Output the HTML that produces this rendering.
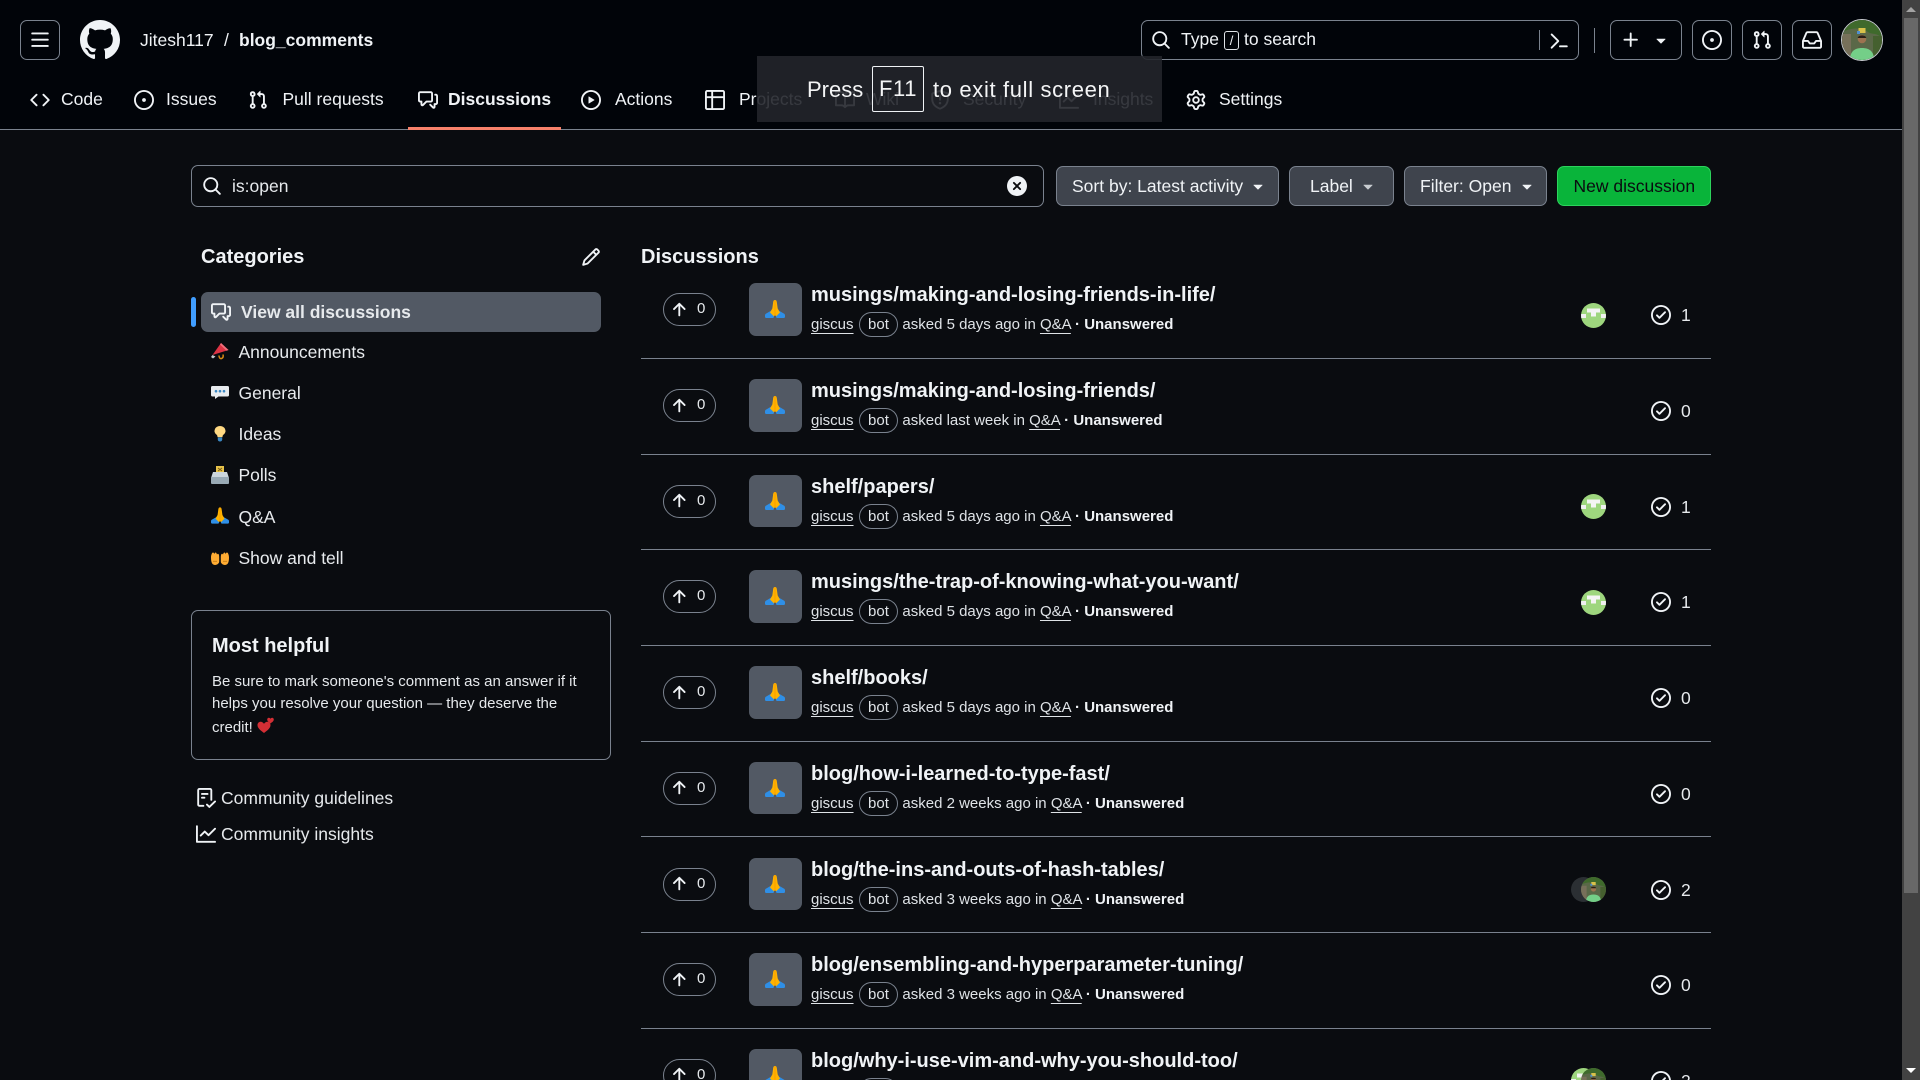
<!DOCTYPE html>
<html lang="en"><head><meta charset="utf-8"><title>Discussions · Jitesh117/blog_comments</title>
<style>
*{box-sizing:border-box}
html,body{margin:0;padding:0;width:1920px;height:1080px;overflow:hidden;background:#0a0c10;color:#f0f3f6;font-family:"Liberation Sans",sans-serif}
body{position:relative}
.a{position:absolute}
.t{position:absolute;white-space:nowrap;line-height:20px;font-size:17.5px}
.b{font-weight:700}
svg{display:block}
svg.i{position:absolute;fill:#f0f3f6}
.box{position:absolute;border:1px solid #7a828e;border-radius:7px}
.btn{position:absolute;height:40px;top:166px;background:#3f444d;border:1px solid #7a828e;border-radius:7px}
.row{position:absolute;left:641px;width:1070px;height:96.7px;border-bottom:1px solid #7a828e}
.vote{position:absolute;left:22px;top:31px;width:53px;height:33px;border:1px solid #7a828e;border-radius:17px}
.vote svg{position:absolute;left:5px;top:5.5px;width:20px;height:20px;fill:#f0f3f6}
.vote span{position:absolute;left:33px;top:5px;font-size:15px;line-height:20px;color:#e6e9ec}
.sq{position:absolute;left:108px;top:21px;width:52.5px;height:52.5px;background:#525964;border-radius:7px}
.sq svg{position:absolute;left:16px;top:17px;width:20px;height:18px}
.ttl{position:absolute;left:170px;top:21px;font-size:20px;font-weight:700;line-height:24px;white-space:nowrap;color:#f0f3f6}
.sub{position:absolute;left:170px;top:51px;font-size:15px;line-height:24px;white-space:nowrap;color:#dfe3e7}
.sub u{text-underline-offset:4px;text-decoration-thickness:1px}
.sub i{font-style:normal;display:inline-block;height:25px;line-height:23px;padding:0 8.5px;margin:-1px 4px 0 5px;border:1px solid #7a828e;border-radius:13px;vertical-align:top}
.sub b{color:#f0f3f6}
.chk{position:absolute;left:1010px;top:43px;width:20px;height:20px;fill:#f0f3f6}
.num{position:absolute;left:1040px;top:43px;font-size:17.5px;line-height:20px;color:#e6e9ec}
.av{position:absolute;top:40.5px;width:25px;height:25px;border-radius:50%;overflow:hidden}
.cat{position:absolute;left:238.500px;font-size:17.5px;line-height:20px;white-space:nowrap;color:#e8ebee}
.hdbtn{position:absolute;top:20px;height:40px;border:1px solid #7a828e;border-radius:7px}
</style></head><body>
<svg width="0" height="0" style="position:absolute">
<defs>
<symbol id="pray" viewBox="0 0 20 18"><path d="M6 10.800 1 13.600c-.7.400-1 1-1 1.700v1.500c0 .7.500 1.200 1.200 1.200h6.600c.7 0 1.200-.5 1.200-1.200v-3z" fill="#2f8fe6"/><path d="M14 10.800l5 2.800c.7.400 1 1 1 1.700v1.500c0 .7-.5 1.200-1.200 1.200h-6.600c-.7 0-1.200-.5-1.200-1.200v-3z" fill="#2f8fe6"/><path d="M10 0C8.500 0 8.200 1.300 8 3.500L7.300 8.500 5 12.500 8.800 16.300 10 15.300l1.200 1L15 12.500 12.700 8.500 12 3.500C11.800 1.300 11.500 0 10 0z" fill="#ffb300"/><path d="M10 0v15.300" stroke="#f59000" stroke-width=".6"/></symbol>
<symbol id="ident" viewBox="0 0 25 25"><rect width="25" height="25" fill="#9ed67e"/><path d="M0 0h6v2H0zM19 0h6v2h-6z" fill="#f0f0f0"/><path d="M6 5.500h13v4h-4v4h-5v-4H6z" fill="#f4f4f4"/><path d="M0 11h5v4H0zM20 11h5v4h-5z" fill="#f0f0f0"/></symbol>
<symbol id="photo" viewBox="0 0 40 40"><rect width="40" height="40" fill="#5a6848"/><path d="M0 0h40v18c-6-6-10-3-14-6S14 6 0 12z" fill="#3f6a2c"/><rect x="0" y="14" width="9" height="26" fill="#77705a"/><rect x="31" y="16" width="9" height="24" fill="#45602f"/><rect x="16.500" y="8" width="7" height="5" fill="#d9c24a"/><rect x="15" y="11" width="3" height="3" fill="#4f8fd0"/><circle cx="20" cy="19" r="4.300" fill="#9d7350"/><path d="M15.700 18c.5-3.500 8-3.500 8.600 0z" fill="#2a2018"/><path d="M8 40c0-8 4-12 12-12s12 4 12 12z" fill="#74cf88"/></symbol>
<symbol id="up" viewBox="0 0 16 16"><path d="M3.470 7.780a.75.75 0 0 1 0-1.060l4.250-4.250a.75.75 0 0 1 1.060 0l4.250 4.250a.751.751 0 0 1-.018 1.042.751.751 0 0 1-1.042.018L9 4.810v7.440a.75.75 0 0 1-1.500 0V4.810L4.530 7.780a.75.75 0 0 1-1.060 0Z"/></symbol>
<symbol id="chk" viewBox="0 0 16 16"><path d="M0 8a8 8 0 1 1 16 0A8 8 0 0 1 0 8Zm1.500 0a6.500 6.500 0 1 0 13 0 6.500 6.500 0 0 0-13 0Zm10.280-1.720-4.500 4.500a.75.75 0 0 1-1.060 0l-2-2a.751.751 0 0 1 .018-1.042.751.751 0 0 1 1.042-.018l1.470 1.470 3.970-3.970a.751.751 0 0 1 1.042.018.751.751 0 0 1 .018 1.042Z"/></symbol>
<symbol id="caret" viewBox="0 0 16 16"><path d="m4.427 7.427 3.396 3.396a.25.25 0 0 0 .354 0l3.396-3.396A.25.25 0 0 0 11.396 7H4.604a.25.25 0 0 0-.177.427Z"/></symbol>
<symbol id="search" viewBox="0 0 16 16"><path d="M10.680 11.740a6 6 0 0 1-7.922-8.982 6 6 0 0 1 8.982 7.922l3.040 3.040a.749.749 0 0 1-.326 1.275.749.749 0 0 1-.734-.215ZM11.500 7a4.499 4.499 0 1 0-8.997 0A4.499 4.499 0 0 0 11.500 7Z"/></symbol>
<symbol id="issue" viewBox="0 0 16 16"><path d="M8 9.500a1.500 1.500 0 1 0 0-3 1.500 1.500 0 0 0 0 3Z"/><path d="M8 0a8 8 0 1 1 0 16A8 8 0 0 1 8 0ZM1.500 8a6.500 6.500 0 1 0 13 0 6.500 6.500 0 0 0-13 0Z"/></symbol>
<symbol id="pr" viewBox="0 0 16 16"><path d="M1.5 3.25a2.25 2.25 0 1 1 3 2.122v5.256a2.251 2.251 0 1 1-1.5 0V5.372A2.25 2.25 0 0 1 1.5 3.25Zm5.677-.177L9.573.677A.25.25 0 0 1 10 .854V2.5h1A2.5 2.5 0 0 1 13.5 5v5.628a2.251 2.251 0 1 1-1.5 0V5a1 1 0 0 0-1-1h-1v1.646a.25.25 0 0 1-.427.177L7.177 3.427a.25.25 0 0 1 0-.354ZM3.75 2.5a.75.75 0 1 0 0 1.5.75.75 0 0 0 0-1.5Zm0 9.5a.75.75 0 1 0 0 1.5.75.75 0 0 0 0-1.5Zm8.25.75a.75.75 0 1 0 1.5 0 .75.75 0 0 0-1.5 0Z"/></symbol>
<symbol id="disc" viewBox="0 0 16 16"><path d="M1.75 1h8.5c.966 0 1.75.784 1.75 1.75v5.5A1.75 1.75 0 0 1 10.25 10H7.061l-2.574 2.573A1.458 1.458 0 0 1 2 11.543V10h-.25A1.75 1.75 0 0 1 0 8.25v-5.5C0 1.784.784 1 1.75 1ZM1.5 2.75v5.5c0 .138.112.25.25.25h1a.75.75 0 0 1 .75.75v2.19l2.72-2.72a.749.749 0 0 1 .53-.22h3.5a.25.25 0 0 0 .25-.25v-5.5a.25.25 0 0 0-.25-.25h-8.5a.25.25 0 0 0-.25.25Zm13 2a.25.25 0 0 0-.25-.25h-.5a.75.75 0 0 1 0-1.5h.5c.966 0 1.75.784 1.75 1.75v5.5A1.75 1.75 0 0 1 14.25 12H14v1.543a1.458 1.458 0 0 1-2.487 1.03L9.22 12.28a.749.749 0 0 1 .326-1.275.749.749 0 0 1 .734.215l2.22 2.22v-2.19a.75.75 0 0 1 .75-.75h1a.25.25 0 0 0 .25-.25Z"/></symbol>
<symbol id="graph" viewBox="0 0 16 16"><path d="M1.5 1.75V13.5h13.75a.75.75 0 0 1 0 1.5H.75a.75.75 0 0 1-.75-.75V1.75a.75.75 0 0 1 1.5 0Zm14.28 2.53-5.25 5.25a.75.75 0 0 1-1.06 0L7 7.06 4.28 9.78a.751.751 0 0 1-1.042-.018.751.751 0 0 1-.018-1.042l3.25-3.25a.75.75 0 0 1 1.06 0L10 7.94l4.72-4.72a.751.751 0 0 1 1.042.018.751.751 0 0 1 .018 1.042Z"/></symbol>
</defs></svg>

<!-- header -->
<div class="a" style="left:0;top:0;width:1902px;height:129.500px;background:#010409;border-bottom:1px solid #7a828e"></div>
<div class="hdbtn" style="left:20px;width:40px"><svg class="i" style="left:9px;top:9px;width:20px;height:20px" viewBox="0 0 16 16"><path d="M1 2.75A.75.75 0 0 1 1.75 2h12.5a.75.75 0 0 1 0 1.5H1.75A.75.75 0 0 1 1 2.75Zm0 5A.75.75 0 0 1 1.75 7h12.5a.75.75 0 0 1 0 1.5H1.75A.75.75 0 0 1 1 7.75ZM1.75 12h12.5a.75.75 0 0 1 0 1.5H1.75a.75.75 0 0 1 0-1.5Z"/></svg></div>
<svg class="i" style="left:80px;top:20px;width:40px;height:40px" viewBox="0 0 16 16"><path d="M8 0c4.42 0 8 3.58 8 8a8.013 8.013 0 0 1-5.45 7.59c-.4.08-.55-.17-.55-.38 0-.27.01-1.13.01-2.2 0-.75-.25-1.23-.54-1.48 1.78-.2 3.65-.88 3.65-3.95 0-.88-.31-1.59-.82-2.15.08-.2.36-1.02-.08-2.12 0 0-.67-.22-2.2.82-.64-.18-1.32-.27-2-.27-.68 0-1.36.09-2 .27-1.53-1.03-2.2-.82-2.2-.82-.44 1.1-.16 1.92-.08 2.12-.51.56-.82 1.28-.82 2.15 0 3.06 1.86 3.75 3.64 3.95-.23.2-.44.55-.51 1.07-.46.21-1.61.55-2.33-.66-.15-.24-.6-.83-1.23-.82-.67.01-.27.38.01.53.34.19.73.9.82 1.13.16.45.68 1.31 2.69.94 0 .67.01 1.3.01 1.49 0 .21-.15.45-.55.38A7.995 7.995 0 0 1 0 8c0-4.42 3.58-8 8-8Z"/></svg>
<span class="t" style="left:140px;top:30px">Jitesh117</span>
<span class="t" style="left:224px;top:30px">/</span>
<span class="t b" style="left:239px;top:30px">blog_comments</span>

<svg class="i" style="left:30px;top:90px;width:20px;height:20px" viewBox="0 0 16 16"><path d="m11.28 3.22 4.25 4.25a.75.75 0 0 1 0 1.06l-4.25 4.25a.749.749 0 0 1-1.275-.326.749.749 0 0 1 .215-.734L13.94 8l-3.72-3.72a.749.749 0 0 1 .326-1.275.749.749 0 0 1 .734.215Zm-6.56 0a.751.751 0 0 1 1.042.018.751.751 0 0 1 .018 1.042L2.06 8l3.72 3.72a.749.749 0 0 1-.326 1.275.749.749 0 0 1-.734-.215L.47 8.53a.75.75 0 0 1 0-1.06Z"/></svg>
<span class="t" style="left:61px;top:89px">Code</span>
<svg class="i" style="left:134px;top:90px;width:20px;height:20px"><use href="#issue"/></svg>
<span class="t" style="left:166px;top:89px">Issues</span>
<svg class="i" style="left:248px;top:90px;width:20px;height:20px"><use href="#pr"/></svg>
<span class="t" style="left:282.500px;top:89px">Pull requests</span>
<svg class="i" style="left:418px;top:90px;width:20px;height:20px"><use href="#disc"/></svg>
<span class="t b" style="left:448px;top:89px">Discussions</span>
<div class="a" style="left:408px;top:127px;width:153px;height:2.500px;background:#f7816a"></div>
<svg class="i" style="left:581px;top:90px;width:20px;height:20px" viewBox="0 0 16 16"><path d="M8 0a8 8 0 1 1 0 16A8 8 0 0 1 8 0ZM1.5 8a6.5 6.5 0 1 0 13 0 6.5 6.5 0 0 0-13 0Zm4.879-2.773 4.264 2.559a.25.25 0 0 1 0 .428l-4.264 2.559A.25.25 0 0 1 6 10.559V5.442a.25.25 0 0 1 .379-.215Z"/></svg>
<span class="t" style="left:615px;top:89px">Actions</span>
<svg class="i" style="left:705px;top:90px;width:20px;height:20px" viewBox="0 0 16 16"><path d="M0 1.75C0 .784.784 0 1.75 0h12.5C15.216 0 16 .784 16 1.75v12.5A1.75 1.75 0 0 1 14.25 16H1.75A1.75 1.75 0 0 1 0 14.25ZM6.5 6.5v8h7.75a.25.25 0 0 0 .25-.25V6.5Zm8-1.5V1.75a.25.25 0 0 0-.25-.25H6.5V5Zm-13 1.5v7.75c0 .138.112.25.25.25H5v-8ZM5 5V1.5H1.75a.25.25 0 0 0-.25.25V5Z"/></svg>
<span class="t" style="left:739px;top:89px">Projects</span>
<svg class="i" style="left:835px;top:90px;width:20px;height:20px" viewBox="0 0 16 16"><path d="M0 1.75A.75.75 0 0 1 .75 1h4.253c1.227 0 2.317.59 3 1.501A3.743 3.743 0 0 1 11.006 1h4.245a.75.75 0 0 1 .75.75v10.5a.75.75 0 0 1-.75.75h-4.507a2.25 2.25 0 0 0-1.591.659l-.622.621a.75.75 0 0 1-1.06 0l-.622-.621A2.25 2.25 0 0 0 5.258 13H.75a.75.75 0 0 1-.75-.75Zm7.251 10.324.004-5.073-.002-2.253A2.25 2.25 0 0 0 5.003 2.5H1.5v9h3.757a3.75 3.75 0 0 1 1.994.574ZM8.755 4.75l-.004 7.322a3.752 3.752 0 0 1 1.992-.572H14.5v-9h-3.495a2.25 2.25 0 0 0-2.25 2.25Z"/></svg>
<span class="t" style="left:866px;top:89px">Wiki</span>
<svg class="i" style="left:930px;top:90px;width:20px;height:20px" viewBox="0 0 16 16"><path d="M7.467.133a1.748 1.748 0 0 1 1.066 0l5.25 1.68A1.75 1.75 0 0 1 15 3.48V7c0 1.566-.32 3.182-1.303 4.682-.983 1.498-2.585 2.813-5.032 3.855a1.697 1.697 0 0 1-1.33 0c-2.447-1.042-4.049-2.357-5.032-3.855C1.32 10.182 1 8.566 1 7V3.48a1.75 1.75 0 0 1 1.217-1.667Zm.61 1.429a.25.25 0 0 0-.153 0l-5.25 1.68a.25.25 0 0 0-.174.238V7c0 1.358.275 2.666 1.057 3.86.784 1.194 2.121 2.34 4.366 3.297a.196.196 0 0 0 .154 0c2.245-.956 3.582-2.104 4.366-3.298C13.225 9.666 13.5 8.36 13.5 7V3.48a.251.251 0 0 0-.174-.237l-5.25-1.68ZM8.75 4.75v3a.75.75 0 0 1-1.5 0v-3a.75.75 0 0 1 1.5 0ZM9 10.5a1 1 0 1 1-2 0 1 1 0 0 1 2 0Z"/></svg>
<span class="t" style="left:963px;top:89px">Security</span>
<svg class="i" style="left:1059px;top:90px;width:20px;height:20px"><use href="#graph"/></svg>
<span class="t" style="left:1093px;top:89px">Insights</span>
<svg class="i" style="left:1186px;top:90px;width:20px;height:20px" viewBox="0 0 16 16"><path d="M8 0a8.2 8.2 0 0 1 .701.031C9.444.095 9.99.645 10.16 1.29l.288 1.107c.018.066.079.158.212.224.231.114.454.243.668.386.123.082.233.09.299.071l1.103-.303c.644-.176 1.392.021 1.82.63.27.385.506.792.704 1.218.315.675.111 1.422-.364 1.891l-.814.806c-.049.048-.098.147-.088.294.016.257.016.515 0 .772-.01.147.038.246.088.294l.814.806c.475.469.679 1.216.364 1.891a7.977 7.977 0 0 1-.704 1.217c-.428.61-1.176.807-1.82.63l-1.102-.302c-.067-.019-.177-.011-.3.071a5.909 5.909 0 0 1-.668.386c-.133.066-.194.158-.211.224l-.29 1.106c-.168.646-.715 1.196-1.458 1.26a8.006 8.006 0 0 1-1.402 0c-.743-.064-1.289-.614-1.458-1.26l-.289-1.106c-.018-.066-.079-.158-.212-.224a5.738 5.738 0 0 1-.668-.386c-.123-.082-.233-.09-.299-.071l-1.103.303c-.644.176-1.392-.021-1.82-.63a8.12 8.12 0 0 1-.704-1.218c-.315-.675-.111-1.422.363-1.891l.815-.806c.05-.048.098-.147.088-.294a6.214 6.214 0 0 1 0-.772c.01-.147-.038-.246-.088-.294l-.815-.806C.635 6.045.431 5.298.746 4.623a7.92 7.92 0 0 1 .704-1.217c.428-.61 1.176-.807 1.82-.63l1.102.302c.067.019.177.011.3-.071.214-.143.437-.272.668-.386.133-.066.194-.158.211-.224l.29-1.106C6.009.645 6.556.095 7.299.03 7.53.01 7.764 0 8 0Zm-.571 1.525c-.036.003-.108.036-.137.146l-.289 1.105c-.147.561-.549.967-.998 1.189-.173.086-.34.183-.5.29-.417.278-.97.423-1.529.27l-1.103-.303c-.109-.03-.175.016-.195.045-.22.312-.412.644-.573.99-.014.031-.021.11.059.19l.815.806c.411.406.562.957.53 1.456a4.709 4.709 0 0 0 0 .582c.032.499-.119 1.05-.53 1.456l-.815.806c-.081.08-.073.159-.059.19.162.346.353.677.573.989.02.03.085.076.195.046l1.102-.303c.56-.153 1.113-.008 1.53.27.161.107.328.204.501.29.447.222.85.629.997 1.189l.289 1.105c.029.109.101.143.137.146a6.6 6.6 0 0 0 1.142 0c.036-.003.108-.036.137-.146l.289-1.105c.147-.561.549-.967.998-1.189.173-.086.34-.183.5-.29.417-.278.97-.423 1.529-.27l1.103.303c.109.029.175-.016.195-.045.22-.313.411-.644.573-.99.014-.031.021-.11-.059-.19l-.815-.806c-.411-.406-.562-.957-.53-1.456a4.709 4.709 0 0 0 0-.582c-.032-.499.119-1.05.53-1.456l.815-.806c.081-.08.073-.159.059-.19a6.464 6.464 0 0 0-.573-.989c-.02-.03-.085-.076-.195-.046l-1.102.303c-.56.153-1.113.008-1.53-.27a4.44 4.44 0 0 0-.501-.29c-.447-.222-.85-.629-.997-1.189l-.289-1.105c-.029-.11-.101-.143-.137-.146a6.6 6.6 0 0 0-1.142 0ZM11 8a3 3 0 1 1-6 0 3 3 0 0 1 6 0ZM9.5 8a1.5 1.5 0 1 0-3.001.001A1.5 1.5 0 0 0 9.5 8Z"/></svg>
<span class="t" style="left:1219px;top:89px">Settings</span>

<!-- global search -->
<div class="hdbtn" style="left:1141px;width:438px"></div>
<svg class="i" style="left:1151px;top:30px;width:20px;height:20px"><use href="#search"/></svg>
<span class="t" style="left:1181px;top:29px">Type</span>
<div class="a" style="left:1224px;top:31px;width:15px;height:19px;border:1px solid #dfe3e7;border-radius:3px;font-size:13px;line-height:17px;text-align:center">/</div>
<span class="t" style="left:1244px;top:29px">to search</span>
<div class="a" style="left:1539px;top:30px;width:1px;height:20px;background:#7a828e"></div>
<svg class="i" style="left:1549px;top:31px;width:20px;height:20px" viewBox="0 0 16 16"><path d="m6.354 8.04-4.773 4.773a.75.75 0 1 0 1.061 1.06L7.945 8.57a.75.75 0 0 0 0-1.06L2.642 2.206a.75.75 0 0 0-1.06 1.061L6.353 8.04ZM8.75 11.5a.75.75 0 0 0 0 1.5h5.5a.75.75 0 0 0 0-1.5h-5.5Z"/></svg>
<div class="a" style="left:1594px;top:28px;width:1px;height:25px;background:#7a828e"></div>
<div class="hdbtn" style="left:1610px;width:72px"></div>
<svg class="i" style="left:1621px;top:30px;width:20px;height:20px" viewBox="0 0 16 16"><path d="M7.75 2a.75.75 0 0 1 .75.75V7h4.25a.75.75 0 0 1 0 1.5H8.5v4.25a.75.75 0 0 1-1.5 0V8.5H2.75a.75.75 0 0 1 0-1.5H7V2.75A.75.75 0 0 1 7.75 2Z"/></svg>
<svg class="i" style="left:1651px;top:30px;width:20px;height:20px"><use href="#caret"/></svg>
<div class="hdbtn" style="left:1692px;width:40px"></div>
<svg class="i" style="left:1702px;top:30px;width:20px;height:20px"><use href="#issue"/></svg>
<div class="hdbtn" style="left:1742px;width:40px"></div>
<svg class="i" style="left:1752px;top:30px;width:20px;height:20px"><use href="#pr"/></svg>
<div class="hdbtn" style="left:1792px;width:40px"></div>
<svg class="i" style="left:1802px;top:30px;width:20px;height:20px" viewBox="0 0 16 16"><path d="M2.8 2.06A1.75 1.75 0 0 1 4.41 1h7.18c.7 0 1.333.417 1.61 1.06l2.74 6.395c.04.093.06.194.06.295v4.5A1.75 1.75 0 0 1 14.25 15H1.75A1.75 1.75 0 0 1 0 13.25v-4.5c0-.101.02-.202.06-.295Zm1.61.44a.25.25 0 0 0-.23.152L1.887 8H4.75a.75.75 0 0 1 .6.3L6.625 10h2.75l1.275-1.7a.75.75 0 0 1 .6-.3h2.863L11.82 2.652a.25.25 0 0 0-.23-.152Zm10.09 7h-2.875l-1.275 1.7a.75.75 0 0 1-.6.3h-3.5a.75.75 0 0 1-.6-.3L4.375 9.5H1.5v3.75c0 .138.112.25.25.25h12.5a.25.25 0 0 0 .25-.25Z"/></svg>
<div class="a" style="left:1841px;top:19px;width:42px;height:42px;border-radius:50%;border:1px solid #c8ccd0;overflow:hidden"><svg width="40" height="40"><use href="#photo"/></svg></div>

<!-- fullscreen toast -->
<div class="a" style="left:757px;top:56px;width:405px;height:66px;background:rgba(34,37,43,.9)"></div>
<span class="t" style="left:807px;top:79px;font-size:22px;line-height:22px;color:#f4f5f6">Press</span>
<div class="a" style="left:872px;top:66px;width:52px;height:46px;border:1px solid #f0f3f6;border-radius:2px;font-size:22px;line-height:44px;letter-spacing:.6px;text-align:center;color:#f4f5f6">F11</div>
<span class="t" style="left:933px;top:79px;font-size:22px;line-height:22px;letter-spacing:.65px;color:#f4f5f6">to exit full screen</span>

<!-- search bar -->
<div class="box" style="left:191px;top:165px;width:853px;height:42px"></div>
<svg class="i" style="left:202px;top:176px;width:20px;height:20px"><use href="#search"/></svg>
<span class="t" style="left:232px;top:176px;color:#e6e9ec">is:open</span>
<svg class="i" style="left:1007px;top:176px;width:20px;height:20px" viewBox="0 0 16 16"><path d="M2.343 13.657A8 8 0 1 1 13.658 2.343 8 8 0 0 1 2.343 13.657ZM6.03 4.97a.751.751 0 0 0-1.042.018.751.751 0 0 0-.018 1.042L6.94 8 4.97 9.97a.749.749 0 0 0 .326 1.275.749.749 0 0 0 .734-.215L8 9.06l1.97 1.97a.749.749 0 0 0 1.275-.326.749.749 0 0 0-.215-.734L9.06 8l1.97-1.97a.749.749 0 0 0-.326-1.275.749.749 0 0 0-.734.215L8 6.94Z"/></svg>

<div class="btn" style="left:1056px;width:223px"></div>
<span class="t" style="left:1072px;top:176px">Sort by: Latest activity</span>
<svg class="i" style="left:1248px;top:176px;width:20px;height:20px"><use href="#caret"/></svg>
<div class="btn" style="left:1289px;width:105px"></div>
<span class="t" style="left:1310px;top:176px">Label</span>
<svg class="i" style="left:1358px;top:176px;width:20px;height:20px;fill:#c8ccd0"><use href="#caret"/></svg>
<div class="btn" style="left:1404px;width:143px"></div>
<span class="t" style="left:1420px;top:176px">Filter: Open</span>
<svg class="i" style="left:1516.500px;top:176px;width:20px;height:20px"><use href="#caret"/></svg>
<div class="btn" style="left:1557px;width:154px;background:#09b43a;border-color:#2dd35c"></div>
<span class="t" style="left:1573.500px;top:176px;color:#0a0c10">New discussion</span>

<!-- sidebar -->
<span class="t b" style="left:201px;top:246.500px;font-size:20px">Categories</span>
<svg class="i" style="left:581px;top:247px;width:20px;height:20px" viewBox="0 0 16 16"><path d="M11.013 1.427a1.75 1.75 0 0 1 2.474 0l1.086 1.086a1.75 1.75 0 0 1 0 2.474l-8.61 8.61c-.21.21-.47.364-.756.445l-3.251.93a.75.75 0 0 1-.927-.928l.929-3.25c.081-.286.235-.547.445-.758l8.61-8.61Zm.176 4.823L9.75 4.81l-6.286 6.287a.253.253 0 0 0-.064.108l-.558 1.953 1.953-.558a.253.253 0 0 0 .108-.064Zm1.238-3.763a.25.25 0 0 0-.354 0L10.811 3.75l1.439 1.44 1.263-1.263a.25.25 0 0 0 0-.354Z"/></svg>
<div class="a" style="left:191px;top:297px;width:5px;height:30px;background:#409eff;border-radius:3px"></div>
<div class="a" style="left:201px;top:292px;width:400px;height:40px;background:#525964;border-radius:7px"></div>
<svg class="i" style="left:211px;top:302px;width:20px;height:20px"><use href="#disc"/></svg>
<span class="t b" style="left:241px;top:302px;color:#e6e9ec">View all discussions</span>

<svg class="a" style="left:211px;top:343px" width="18" height="17" viewBox="0 0 18 17"><path d="M1.500 12 10 0l7.500 7z" fill="#dd3344"/><path d="M10 0l7.500 7-2 .8L9 1.500z" fill="#f0707c"/><path d="M8 12.500c0 2 1 3.500 2.500 3s2-2 1.500-4" fill="none" stroke="#d98a14" stroke-width="1.500"/><path d="M1.500 12l3 1.500-2.500 2L0 14z" fill="#c4c8cc"/></svg>
<span class="cat" style="top:342px">Announcements</span>
<svg class="a" style="left:211px;top:386px" width="18" height="13" viewBox="0 0 18 13"><path d="M1.500 0h15A1.500 1.500 0 0 1 18 1.500v7.500a1.500 1.500 0 0 1-1.500 1.500H7.500L4 13v-2.500H1.500A1.500 1.500 0 0 1 0 9V1.500A1.500 1.500 0 0 1 1.500 0z" fill="#e8ecef"/><circle cx="5" cy="5.200" r="1.300" fill="#3b88c3"/><circle cx="9" cy="5.200" r="1.300" fill="#3b88c3"/><circle cx="13" cy="5.200" r="1.300" fill="#3b88c3"/></svg>
<span class="cat" style="top:383px">General</span>
<svg class="a" style="left:211px;top:426px" width="18" height="16" viewBox="0 0 18 18" preserveAspectRatio="none"><path d="M9 0a5.500 5.500 0 0 0-3.500 9.700c.7.700 1 1.500 1 2.800h5c0-1.300.3-2.100 1-2.800A5.500 5.500 0 0 0 9 0z" fill="#ffd983"/><path d="M6.800 12.800h4.400v2.500a2.200 2.200 0 0 1-4.400 0z" fill="#3b88c3"/></svg>
<span class="cat" style="top:424px">Ideas</span>
<svg class="a" style="left:211px;top:466px" width="18" height="18" viewBox="0 0 18 18"><rect x="5" y="0" width="8" height="7" fill="#e8c34a"/><path d="M7 2l4 3M11 2 7 5" stroke="#7a5c18" stroke-width="1"/><path d="M2 6h14l2 6H0z" fill="#ccd6dd"/><rect y="11" width="18" height="7" rx="1" fill="#99aab5"/></svg>
<span class="cat" style="top:465px">Polls</span>
<svg class="a" style="left:211px;top:507px" width="18" height="17"><use href="#pray"/></svg>
<span class="cat" style="top:507px">Q&amp;A</span>
<svg class="a" style="left:211px;top:550px" width="18" height="15" viewBox="0 0 18 18" preserveAspectRatio="none"><path d="M0 9c0-3 1-6 2-6 .8 0 1 1 1.300 2 .2-1 .7-2 1.400-2s1 1.500 1.300 2.500C6.300 4.500 7 4 7.600 5c.6 1 .6 3 .6 5v4c0 2-2 4-4 4-3 0-4.200-3-4.200-9z" fill="#ffac33"/><path d="M18 9c0-3-1-6-2-6-.8 0-1 1-1.300 2-.2-1-.7-2-1.400-2s-1 1.500-1.300 2.500C11.700 4.500 11 4 10.400 5c-.6 1-.6 3-.6 5v4c0 2 2 4 4 4 3 0 4.200-3 4.200-9z" fill="#ffac33"/><path d="M2 13.500h4M12 13.500h4" stroke="#b8730f" stroke-width="1"/></svg>
<span class="cat" style="top:548px">Show and tell</span>

<div class="box" style="left:191px;top:610px;width:420px;height:150px"></div>
<span class="t b" style="left:212px;top:636px;font-size:20px">Most helpful</span>
<span class="t" style="left:212px;top:672px;font-size:15px;color:#e6e9ec">Be sure to mark someone's comment as an answer if it</span>
<span class="t" style="left:212px;top:694px;font-size:15px;color:#e6e9ec">helps you resolve your question — they deserve the</span>
<span class="t" style="left:212px;top:718px;font-size:15px;color:#e6e9ec">credit!</span>
<svg class="a" style="left:257px;top:716px" width="18" height="17" viewBox="0 0 18 17"><path d="M7 17C3 14 .5 12 .5 9 .5 7 2 5.700 3.600 5.700c1.400 0 2.700.8 3.400 2.200.7-1.400 2-2.200 3.400-2.200 1.600 0 3.100 1.300 3.100 3.300 0 3-2.500 5-6.500 8z" fill="#d42f35"/><path d="M13.500 7.500C11.500 6 10.200 5 10.200 3.400c0-1 .8-1.700 1.600-1.700.7 0 1.300.4 1.700 1.100.4-.7 1-1.100 1.700-1.100.8 0 1.600.7 1.600 1.700 0 1.600-1.300 2.600-3.300 4.100z" fill="#d42f35"/></svg>
<svg class="i" style="left:196px;top:788px;width:20px;height:20px" viewBox="0 0 16 16"><path d="M2.5 1.75v11.5c0 .138.112.25.25.25h3.17a.75.75 0 0 1 0 1.5H2.75A1.75 1.75 0 0 1 1 13.25V1.75C1 .784 1.784 0 2.75 0h8.5C12.216 0 13 .784 13 1.75v7.736a.75.75 0 0 1-1.5 0V1.75a.25.25 0 0 0-.25-.25h-8.5a.25.25 0 0 0-.25.25Zm13.274 9.537v-.001l-4.557 4.45a.75.75 0 0 1-1.055-.008l-1.943-1.95a.75.75 0 0 1 1.062-1.058l1.419 1.425 4.026-3.932a.75.75 0 1 1 1.048 1.074ZM4.750 4h4.500a.75.75 0 0 1 0 1.500h-4.500a.75.75 0 0 1 0-1.500ZM4 7.750A.75.75 0 0 1 4.750 7h2a.75.75 0 0 1 0 1.500h-2A.75.75 0 0 1 4 7.750Z"/></svg>
<span class="t" style="left:221px;top:788px;color:#e6e9ec">Community guidelines</span>
<svg class="i" style="left:196px;top:824px;width:20px;height:20px"><use href="#graph"/></svg>
<span class="t" style="left:221px;top:824px;color:#e6e9ec">Community insights</span>

<!-- discussions -->
<span class="t b" style="left:641px;top:247px;font-size:20px">Discussions</span>

<div class="row" style="top:262.300px"><div class="vote"><svg><use href="#up"/></svg><span>0</span></div><div class="sq"><svg><use href="#pray"/></svg></div><div class="ttl">musings/making-and-losing-friends-in-life/</div><div class="sub"><u>giscus</u><i>bot</i>asked 5 days ago in <u>Q&amp;A</u> <b>·</b> <b>Unanswered</b></div><div class="av" style="left:940px"><svg width="25" height="25"><use href="#ident"/></svg></div><svg class="chk"><use href="#chk"/></svg><span class="num">1</span></div>

<div class="row" style="top:358px"><div class="vote"><svg><use href="#up"/></svg><span>0</span></div><div class="sq"><svg><use href="#pray"/></svg></div><div class="ttl">musings/making-and-losing-friends/</div><div class="sub"><u>giscus</u><i>bot</i>asked last week in <u>Q&amp;A</u> <b>·</b> <b>Unanswered</b></div><svg class="chk"><use href="#chk"/></svg><span class="num">0</span></div>

<div class="row" style="top:453.700px"><div class="vote"><svg><use href="#up"/></svg><span>0</span></div><div class="sq"><svg><use href="#pray"/></svg></div><div class="ttl">shelf/papers/</div><div class="sub"><u>giscus</u><i>bot</i>asked 5 days ago in <u>Q&amp;A</u> <b>·</b> <b>Unanswered</b></div><div class="av" style="left:940px"><svg width="25" height="25"><use href="#ident"/></svg></div><svg class="chk"><use href="#chk"/></svg><span class="num">1</span></div>

<div class="row" style="top:549.400px"><div class="vote"><svg><use href="#up"/></svg><span>0</span></div><div class="sq"><svg><use href="#pray"/></svg></div><div class="ttl">musings/the-trap-of-knowing-what-you-want/</div><div class="sub"><u>giscus</u><i>bot</i>asked 5 days ago in <u>Q&amp;A</u> <b>·</b> <b>Unanswered</b></div><div class="av" style="left:940px"><svg width="25" height="25"><use href="#ident"/></svg></div><svg class="chk"><use href="#chk"/></svg><span class="num">1</span></div>

<div class="row" style="top:645.100px"><div class="vote"><svg><use href="#up"/></svg><span>0</span></div><div class="sq"><svg><use href="#pray"/></svg></div><div class="ttl">shelf/books/</div><div class="sub"><u>giscus</u><i>bot</i>asked 5 days ago in <u>Q&amp;A</u> <b>·</b> <b>Unanswered</b></div><svg class="chk"><use href="#chk"/></svg><span class="num">0</span></div>

<div class="row" style="top:740.800px"><div class="vote"><svg><use href="#up"/></svg><span>0</span></div><div class="sq"><svg><use href="#pray"/></svg></div><div class="ttl">blog/how-i-learned-to-type-fast/</div><div class="sub"><u>giscus</u><i>bot</i>asked 2 weeks ago in <u>Q&amp;A</u> <b>·</b> <b>Unanswered</b></div><svg class="chk"><use href="#chk"/></svg><span class="num">0</span></div>

<div class="row" style="top:836.500px"><div class="vote"><svg><use href="#up"/></svg><span>0</span></div><div class="sq"><svg><use href="#pray"/></svg></div><div class="ttl">blog/the-ins-and-outs-of-hash-tables/</div><div class="sub"><u>giscus</u><i>bot</i>asked 3 weeks ago in <u>Q&amp;A</u> <b>·</b> <b>Unanswered</b></div><div class="av" style="left:930px;background:#2b2f33"></div><div class="av" style="left:940px"><svg width="25" height="25"><use href="#photo"/></svg></div><svg class="chk"><use href="#chk"/></svg><span class="num">2</span></div>

<div class="row" style="top:932.200px"><div class="vote"><svg><use href="#up"/></svg><span>0</span></div><div class="sq"><svg><use href="#pray"/></svg></div><div class="ttl">blog/ensembling-and-hyperparameter-tuning/</div><div class="sub"><u>giscus</u><i>bot</i>asked 3 weeks ago in <u>Q&amp;A</u> <b>·</b> <b>Unanswered</b></div><svg class="chk"><use href="#chk"/></svg><span class="num">0</span></div>

<div class="row" style="top:1027.900px"><div class="vote"><svg><use href="#up"/></svg><span>0</span></div><div class="sq"><svg><use href="#pray"/></svg></div><div class="ttl">blog/why-i-use-vim-and-why-you-should-too/</div><div class="sub"><u>giscus</u><i>bot</i>asked 3 weeks ago in <u>Q&amp;A</u> <b>·</b> <b>Unanswered</b></div><div class="av" style="left:930px"><svg width="25" height="25"><use href="#ident"/></svg></div><div class="av" style="left:940px"><svg width="25" height="25"><use href="#photo"/></svg></div><svg class="chk"><use href="#chk"/></svg><span class="num">2</span></div>

<!-- scrollbar -->
<div class="a" style="left:1902px;top:0;width:18px;height:1080px;background:#424242"></div>
<div class="a" style="left:1904px;top:18px;width:14px;height:875px;background:#686868"></div>
<div class="a" style="left:1906px;top:7px;width:0;height:0;border-left:5px solid transparent;border-right:5px solid transparent;border-bottom:5px solid #a3a3a3"></div>
<div class="a" style="left:1906px;top:1068px;width:0;height:0;border-left:5px solid transparent;border-right:5px solid transparent;border-top:5px solid #fff"></div>
</body></html>
